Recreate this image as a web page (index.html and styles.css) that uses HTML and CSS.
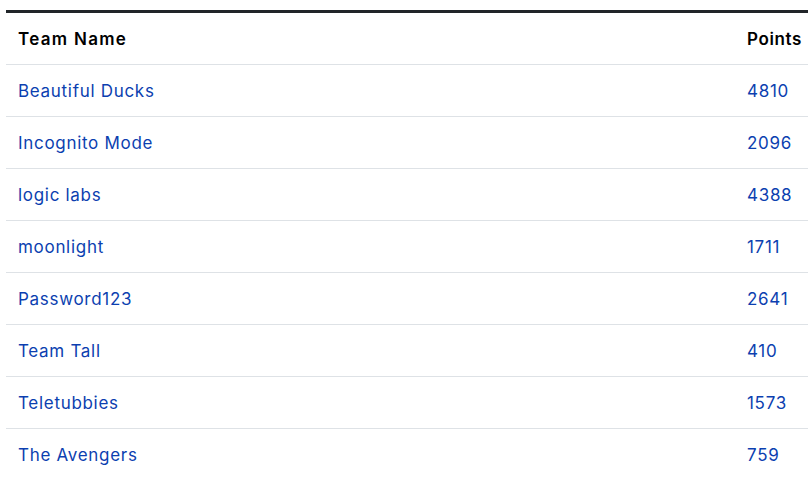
FILE: index.html
```html
<!DOCTYPE html>
<html>
<head>
<meta charset="utf-8">
<link rel="stylesheet" href="styles.css">
</head>
<body>
<div class="wrap">
  <table class="board">
    <thead>
      <tr><th class="name">Team Name</th><th class="pts">Points</th></tr>
    </thead>
    <tbody>
      <tr><td><a href="#">Beautiful Ducks</a></td><td><a href="#">4810</a></td></tr>
      <tr><td><a href="#">Incognito Mode</a></td><td><a href="#">2096</a></td></tr>
      <tr><td><a href="#">logic labs</a></td><td><a href="#">4388</a></td></tr>
      <tr><td><a href="#">moonlight</a></td><td><a href="#">1711</a></td></tr>
      <tr><td><a href="#">Password123</a></td><td><a href="#">2641</a></td></tr>
      <tr><td><a href="#">Team Tall</a></td><td><a href="#">410</a></td></tr>
      <tr><td><a href="#">Teletubbies</a></td><td><a href="#">1573</a></td></tr>
      <tr><td><a href="#">The Avengers</a></td><td><a href="#">759</a></td></tr>
    </tbody>
  </table>
</div>
</body>
</html>
```
FILE: styles.css
```css
html, body {
  margin: 0;
  padding: 0;
  background: #fff;
  overflow: hidden;
}
body {
  font-family: Inter, "Noto Sans", sans-serif;
  font-size: 17px;
  letter-spacing: 0.7px;
}
.wrap {
  padding: 10px 0 0 6px;
}
.board {
  width: 808px;
  border-collapse: collapse;
  border-top: 3px solid #212529;
}
.board th, .board td {
  height: 52px;
  padding: 0 12px;
  box-sizing: border-box;
  text-align: left;
  vertical-align: middle;
  border-bottom: 1px solid #dee2e6;
}
.board th {
  height: 53px;
  font-size: 17px;
  letter-spacing: 1.3px;
  font-weight: 600;
  color: #000;
}
.board th.pts {
  width: 79px;
  letter-spacing: 0.6px;
}
.board a {
  color: #0c3fb0;
  text-decoration: none;
}
.board tbody tr:last-child td {
  border-bottom: none;
}
```
